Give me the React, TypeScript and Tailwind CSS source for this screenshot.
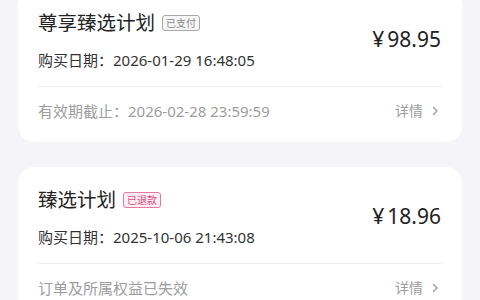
import React from 'react';

interface Order {
  title: string;
  status: 'paid' | 'refunded';
  purchased: string;
  price: string;
  footer: string;
  footerValue?: string;
}

const orders: Order[] = [
  {
    title: '尊享臻选计划',
    status: 'paid',
    purchased: '2026-01-29 16:48:05',
    price: '98.95',
    footer: '有效期截止：',
    footerValue: '2026-02-28 23:59:59',
  },
  {
    title: '臻选计划',
    status: 'refunded',
    purchased: '2025-10-06 21:43:08',
    price: '18.96',
    footer: '订单及所属权益已失效',
  },
];

function Badge({ status }: { status: Order['status'] }) {
  if (status === 'paid') {
    return (
      <span className="ml-[7px] inline-flex h-[16px] items-center rounded-[3px] border border-[#a8a8a8] bg-[#f7f7f7] px-[3px] text-[10px] leading-none text-[#8a8a8a]">
        已支付
      </span>
    );
  }
  return (
    <span className="ml-[7px] inline-flex h-[16px] items-center rounded-[3px] border border-[#e6789e] bg-[#fdeef3] px-[3px] text-[10px] leading-none text-[#e2497f]">
      已退款
    </span>
  );
}

function Chevron() {
  return (
    <svg width="8" height="12" viewBox="0 0 8 12" className="ml-[8px]">
      <polyline points="2.5,2.5 6,6 2.5,9.5" fill="none" stroke="#9a9a9a" strokeWidth="1.3" strokeLinecap="round" strokeLinejoin="round" />
    </svg>
  );
}

function OrderCard({ order }: { order: Order }) {
  return (
    <div className="rounded-[16px] bg-white px-5 pt-[20px] pb-[21px]">
      {/* top: title, date, price */}
      <div className="flex items-center justify-between">
        <div className="flex flex-col">
          <div className="flex h-[26px] items-center">
            <span className="text-[19.5px] leading-[26px] text-[#222]">{order.title}</span>
            <Badge status={order.status} />
          </div>
          <div className="mt-[14px] text-[15px] leading-[20px] text-[#333]">
            购买日期：{order.purchased}
          </div>
        </div>
        <div className="mr-[1px] mt-[-3px] text-[21px] leading-[28px] text-[#222]">
          ¥<span className="ml-[3px]">{order.price}</span>
        </div>
      </div>

      <div className="mt-[16px] h-px bg-[#eeeeee]" />

      {/* footer */}
      <div className="mt-[14px] flex items-center justify-between text-[15px] leading-[20px] text-[#9d9d9d]">
        <span>
          {order.footer}
          {order.footerValue}
        </span>
        <span className="mr-[3px] flex items-center text-[14px]">
          详情
          <Chevron />
        </span>
      </div>
    </div>
  );
}

export default function App() {
  return (
    <div
      className="h-[300px] w-[480px] overflow-hidden bg-[#f5f5f9]"
      style={{ fontFamily: '"Noto Sans", "Noto Sans CJK SC", sans-serif' }}
    >
      <div className="mt-[-10px] flex flex-col gap-[25px] pl-[18px] pr-[18px]">
        {orders.map((o) => (
          <OrderCard key={o.title} order={o} />
        ))}
      </div>
    </div>
  );
}
